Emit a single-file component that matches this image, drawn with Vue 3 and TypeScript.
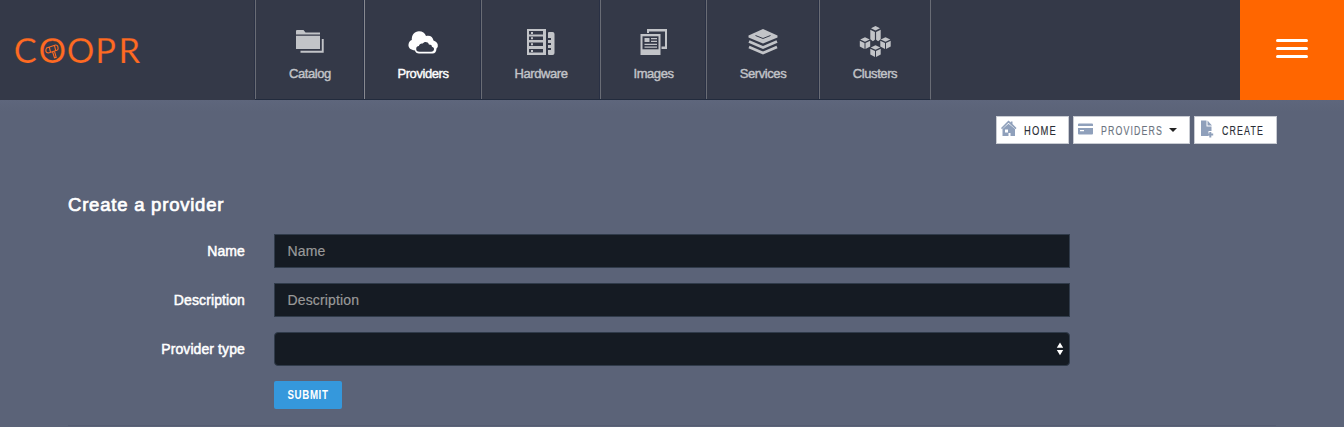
<script setup lang="ts">
interface NavItem { label: string; icon: string; width: number; active?: boolean }
interface Crumb { label: string; icon: string; width: number; textWidth: number; muted?: boolean; caret?: boolean }

const navItems: NavItem[] = [
  { label: 'Catalog', icon: 'catalog', width: 109 },
  { label: 'Providers', icon: 'providers', width: 117, active: true },
  { label: 'Hardware', icon: 'hardware', width: 119 },
  { label: 'Images', icon: 'images', width: 106 },
  { label: 'Services', icon: 'services', width: 113 },
  { label: 'Clusters', icon: 'clusters', width: 111 },
]
const crumbs: Crumb[] = [
  { label: 'HOME', icon: 'home', width: 73, textWidth: 33 },
  { label: 'PROVIDERS', icon: 'card', width: 117, textWidth: 62, muted: true, caret: true },
  { label: 'CREATE', icon: 'file', width: 83, textWidth: 42 },
]
// Top-left corners of the small cubes in the clusters icon
const cubes = [[1, 12], [21.5, 12], [11.5, 20]]
</script>

<template>
  <div class="page">
    <header class="header">
      <svg class="logo" width="140" height="44" viewBox="0 0 140 44" role="img" aria-label="COOPR">
        <text y="34.800" x="2.800 27.600 55.800 84.300 107.500">COOPR</text>
        <g fill="none" stroke="#ff6a22" stroke-width="1.100">
          <path d="M35.500 20l9-3q1.800-.2 2.200 1.200l.4 2q.2 1.500-1.200 2l-8.400 2.700q-2 .2-2.500-1.400t.5-3.500zM38.400 19.300l1 4.600M43.500 17.600l1.100 4.600M41.500 23.500l2 6.300 1.700-.5-1.800-6.300"/>
        </g>
      </svg>
      <nav class="nav">
        <a v-for="item in navItems" :key="item.label" class="nav-item" :class="{ active: item.active }" :style="{ width: item.width + 'px' }">
          <svg class="nav-icon" width="34" height="34" viewBox="0 0 34 34">
            <g v-if="item.icon === 'catalog'" fill="currentColor">
              <path d="M3 6q0-1 1-1h6.500l2 2.500H27V9.500H3zM3 10.700H27V24H3z"/>
              <path d="M28.800 14H30.700V27.700H7.500V25.800H28.800z"/>
            </g>
            <g v-else-if="item.icon === 'providers'">
              <path fill="currentColor" d="M9 25.500C5 25 2 23 2.500 19.500c.3-2.500 1.700-4 3.300-4.500C5.500 10 8.500 6.200 13 6.200c3.500 0 6 1.700 7 4.800 4-1.200 7 1 7.500 4.500 3 1 4.700 3 4.300 5.500.1 1.300-.8 2-1.300 2.500 0 3-1.500 5-4 5H13c-2 0-3.700-1-4-3z"/>
              <path fill="#343948" d="M13.500 26.700c-2.300 0-3.500-1.200-3.300-3 0-1.600 1.200-2.600 2.700-2.700.3-1.700 2-2.800 3.800-2.400 1.500-2.400 5.300-2 6.200.8 2 0 3 .9 3 2.300 1.600.4 2.300 1.200 2.100 2.600-.1 1.600-1.100 2.400-2.900 2.400z"/>
            </g>
            <g v-else-if="item.icon === 'hardware'">
              <path fill="currentColor" d="M3 4h19v26H3zM24 8q0-1 1-1h3.500q2 0 2 2v19q0 2-2 2H25q-1 0-1-1v-4h3v-2h-3v-3h3v-2h-3v-3h3v-2h-3z"/>
              <path fill="#343948" d="M5 6h14v3.500H5zM5 11.500h14V15H5zM5 17.500h14V21H5zM5 24h14v3.500H5z"/>
              <path fill="currentColor" d="M7 7h2v2H7zM7 12.300h2v2H7zM7 18.300h2v2H7zM7 25h2v2H7z"/>
            </g>
            <g v-else-if="item.icon === 'images'">
              <path fill="currentColor" d="M10 4h20v20h-5.500v-2.500H28V6.500H12V8h-2zM3.500 9H23.500v21H3.500z"/>
              <path fill="#343948" d="M5.500 11.300h16v13h-16z"/>
              <path fill="currentColor" d="M7.500 13h5v4h-5zM14 13h6v1.300h-6zM14 15.800h6V17h-6zM7.500 18.800H20V20H7.500zM7.500 21.600H20v1.200H7.500z"/>
            </g>
            <g v-else-if="item.icon === 'services'">
              <path fill="currentColor" d="M17 4L31.500 10.500v2L17 18.500 2.500 12.500v-2z"/>
              <path fill="none" stroke="#343948" stroke-width="1" d="M9.500 10.500L17 13.500l7.500-3"/>
              <path fill="none" stroke="currentColor" stroke-width="2.700" d="M3 16.500l14 6 14-6M3 22l14 6 14-6"/>
            </g>
            <g v-else>
              <path fill="currentColor" d="M17.500 1l4.500 2.200-4.500 2.300L13 3.200zM12.300 4.800l4.600 2.300v7.700l-2 1.500-2.600-2zM22.700 4.800l-4.600 2.300v7.700l2 1.500 2.600-2z"/>
              <g v-for="cube in cubes" :key="cube.join()" :transform="`translate(${cube[0]} ${cube[1]})`" fill="currentColor">
                <path d="M6 .300l4.800 2.200L6 4.800 1.200 2.500zM.800 3.700l4.700 2.200v6L.800 9.500zM11.200 3.700L6.500 5.900v6l4.700-2.400z"/>
              </g>
            </g>
          </svg>
          <span>{{ item.label }}</span>
        </a>
      </nav>
      <button class="menu" aria-label="Menu"><i></i><i></i><i></i></button>
    </header>

    <div class="crumbs">
      <a v-for="crumb in crumbs" :key="crumb.label" class="crumb" :class="{ muted: crumb.muted }" :style="{ width: crumb.width + 'px' }">
        <svg class="crumb-icon" width="18" height="18" viewBox="0 0 18 18" fill="#8fa0bb">
          <template v-if="crumb.icon === 'home'">
            <path d="M0 8L7.500.500l2.300 2v-1h1.700v2.500L15.500 8l-1 1.200-7-6.500-6.500 6.500z"/>
            <path fill-rule="evenodd" d="M1.500 9l6-5.200 6.500 5.200v7H9.500v-3h-2v3h-6zM4 9.500h3v3H4z"/>
          </template>
          <path v-else-if="crumb.icon === 'card'" fill-rule="evenodd" d="M1 3.500h13q1 0 1 1V6H0V4.500q0-1 1-1zM0 8h15v5.500q0 1-1 1H1q-1 0-1-1zM2 10v1.300h4V10z"/>
          <template v-else>
            <path d="M2 .500h5.500v6H12.500V11H9.500v5H2zM8.500.500L13 5.500H8.500z"/>
            <path d="M10.300 12V13.500H8.500v2h1.800v2h2v-2h1.900v-2h-1.900v-1.500z"/>
          </template>
        </svg>
        <svg class="label" :width="crumb.textWidth" height="14">
          <text x="0" y="11.500" :textLength="crumb.textWidth" lengthAdjust="spacingAndGlyphs">{{ crumb.label }}</text>
        </svg>
        <i v-if="crumb.caret" class="caret"></i>
      </a>
    </div>

    <main class="content">
      <h1>Create a provider</h1>
      <form @submit.prevent>
        <label for="name">Name</label>
        <input id="name" placeholder="Name">
        <label for="description">Description</label>
        <input id="description" placeholder="Description">
        <label for="type">Provider type</label>
        <div id="type" class="select">
          <svg width="8" height="14" viewBox="0 0 8 14" fill="#fff"><path d="M4 .500l3.200 5.200H.800zM4 13.200L.800 8h6.400z"/></svg>
        </div>
        <button class="submit">
          <svg width="42" height="16"><text x=".5" y="12.300" textLength="41" lengthAdjust="spacingAndGlyphs">SUBMIT</text></svg>
        </button>
      </form>
      <div class="rule"></div>
    </main>
  </div>
</template>

<style>
body { margin: 0; background: #5b6378; }
</style>

<style scoped>
.page { box-sizing: border-box; height: 427px; overflow: hidden; background: linear-gradient(#343948 100px, #5e667c 100px, #5b6378 112px); font-family: "Liberation Sans", Arial, sans-serif; color: #fff; }
.header { display: flex; height: 100px; background: #343948; }
.logo { flex: none; margin: 28px 104px 0 11px; }
.logo text { font: 400 34.500px Lato, sans-serif; fill: #ff6a22; stroke: #343948; stroke-width: .25; }
.nav { display: flex; height: 99px; border-right: 1px solid #696c75; border-bottom: 1px solid #222b3d; }
.nav-item { box-sizing: border-box; display: flex; flex-direction: column; align-items: center; padding-top: 25px; border-left: 1px solid #696c75; box-shadow: -1px 0 #293044; color: #c2c4c8; font-size: 13px; letter-spacing: -.42px; -webkit-text-stroke: .4px currentColor; }
.nav-item.active { color: #fff; border-left-color: #878990; }
.nav-icon { margin-bottom: 7px; -webkit-text-stroke: 0; }
.nav-item span { line-height: 16px; }
.menu { margin-left: auto; width: 104px; border: 0; padding: 0; background: #f60; display: flex; flex-direction: column; gap: 5px; align-items: center; justify-content: center; }
.menu i { width: 32px; height: 3px; border-radius: 1.500px; background: #fff; position: relative; top: -1.500px; }
.crumbs { display: flex; justify-content: flex-end; gap: 4px; padding: 16px 67px 0 0; height: 28px; }
.crumb { box-sizing: border-box; display: flex; align-items: center; height: 28px; border: 1px solid #c9ccd3; background: #fff; padding-left: 4px; color: #292d35; }
.crumb.muted { color: #6b7480; }
.crumb-icon { margin: -2px 5px 0 0; }
.label { overflow: visible; }
.label text { font-size: 12.500px; letter-spacing: 1.600px; fill: currentColor; stroke: currentColor; stroke-width: .15; }
.caret { margin: -1px 0 0 6px; border: 4px solid transparent; border-top-color: #222; border-bottom: 0; }
.content { padding: 50px 68px 0; }
h1 { margin: 0 0 18px; font-size: 18.500px; line-height: 22px; font-weight: 400; letter-spacing: .78px; -webkit-text-stroke: .7px #fff; }
form { display: grid; grid-template-columns: 177px 796px; column-gap: 29px; row-gap: 15px; align-items: center; }
label { text-align: right; font-size: 14px; letter-spacing: .1px; -webkit-text-stroke: .5px #fff; }
input, .select { box-sizing: border-box; width: 796px; height: 34px; border: 1px solid #303b4a; border-radius: 0; background: #151b23; padding: 0 12.500px; color: #fff; font: 14px "Liberation Sans", Arial, sans-serif; letter-spacing: .15px; }
input::placeholder { color: #999; opacity: 1; -webkit-text-stroke: .2px #999; }
.select { display: flex; align-items: center; justify-content: flex-end; border-radius: 4px; padding-right: 5px; }
.submit { grid-column: 2; width: 68px; height: 28px; border: 0; border-radius: 2px; padding: 0; background: #3598dc; display: flex; align-items: center; justify-content: center; }
.submit svg { overflow: visible; }
.submit text { font: bold 12.500px "Liberation Sans", Arial, sans-serif; letter-spacing: .8px; fill: #fff; }
.rule { height: 1px; margin-top: 16px; background: #555c72; }
</style>
